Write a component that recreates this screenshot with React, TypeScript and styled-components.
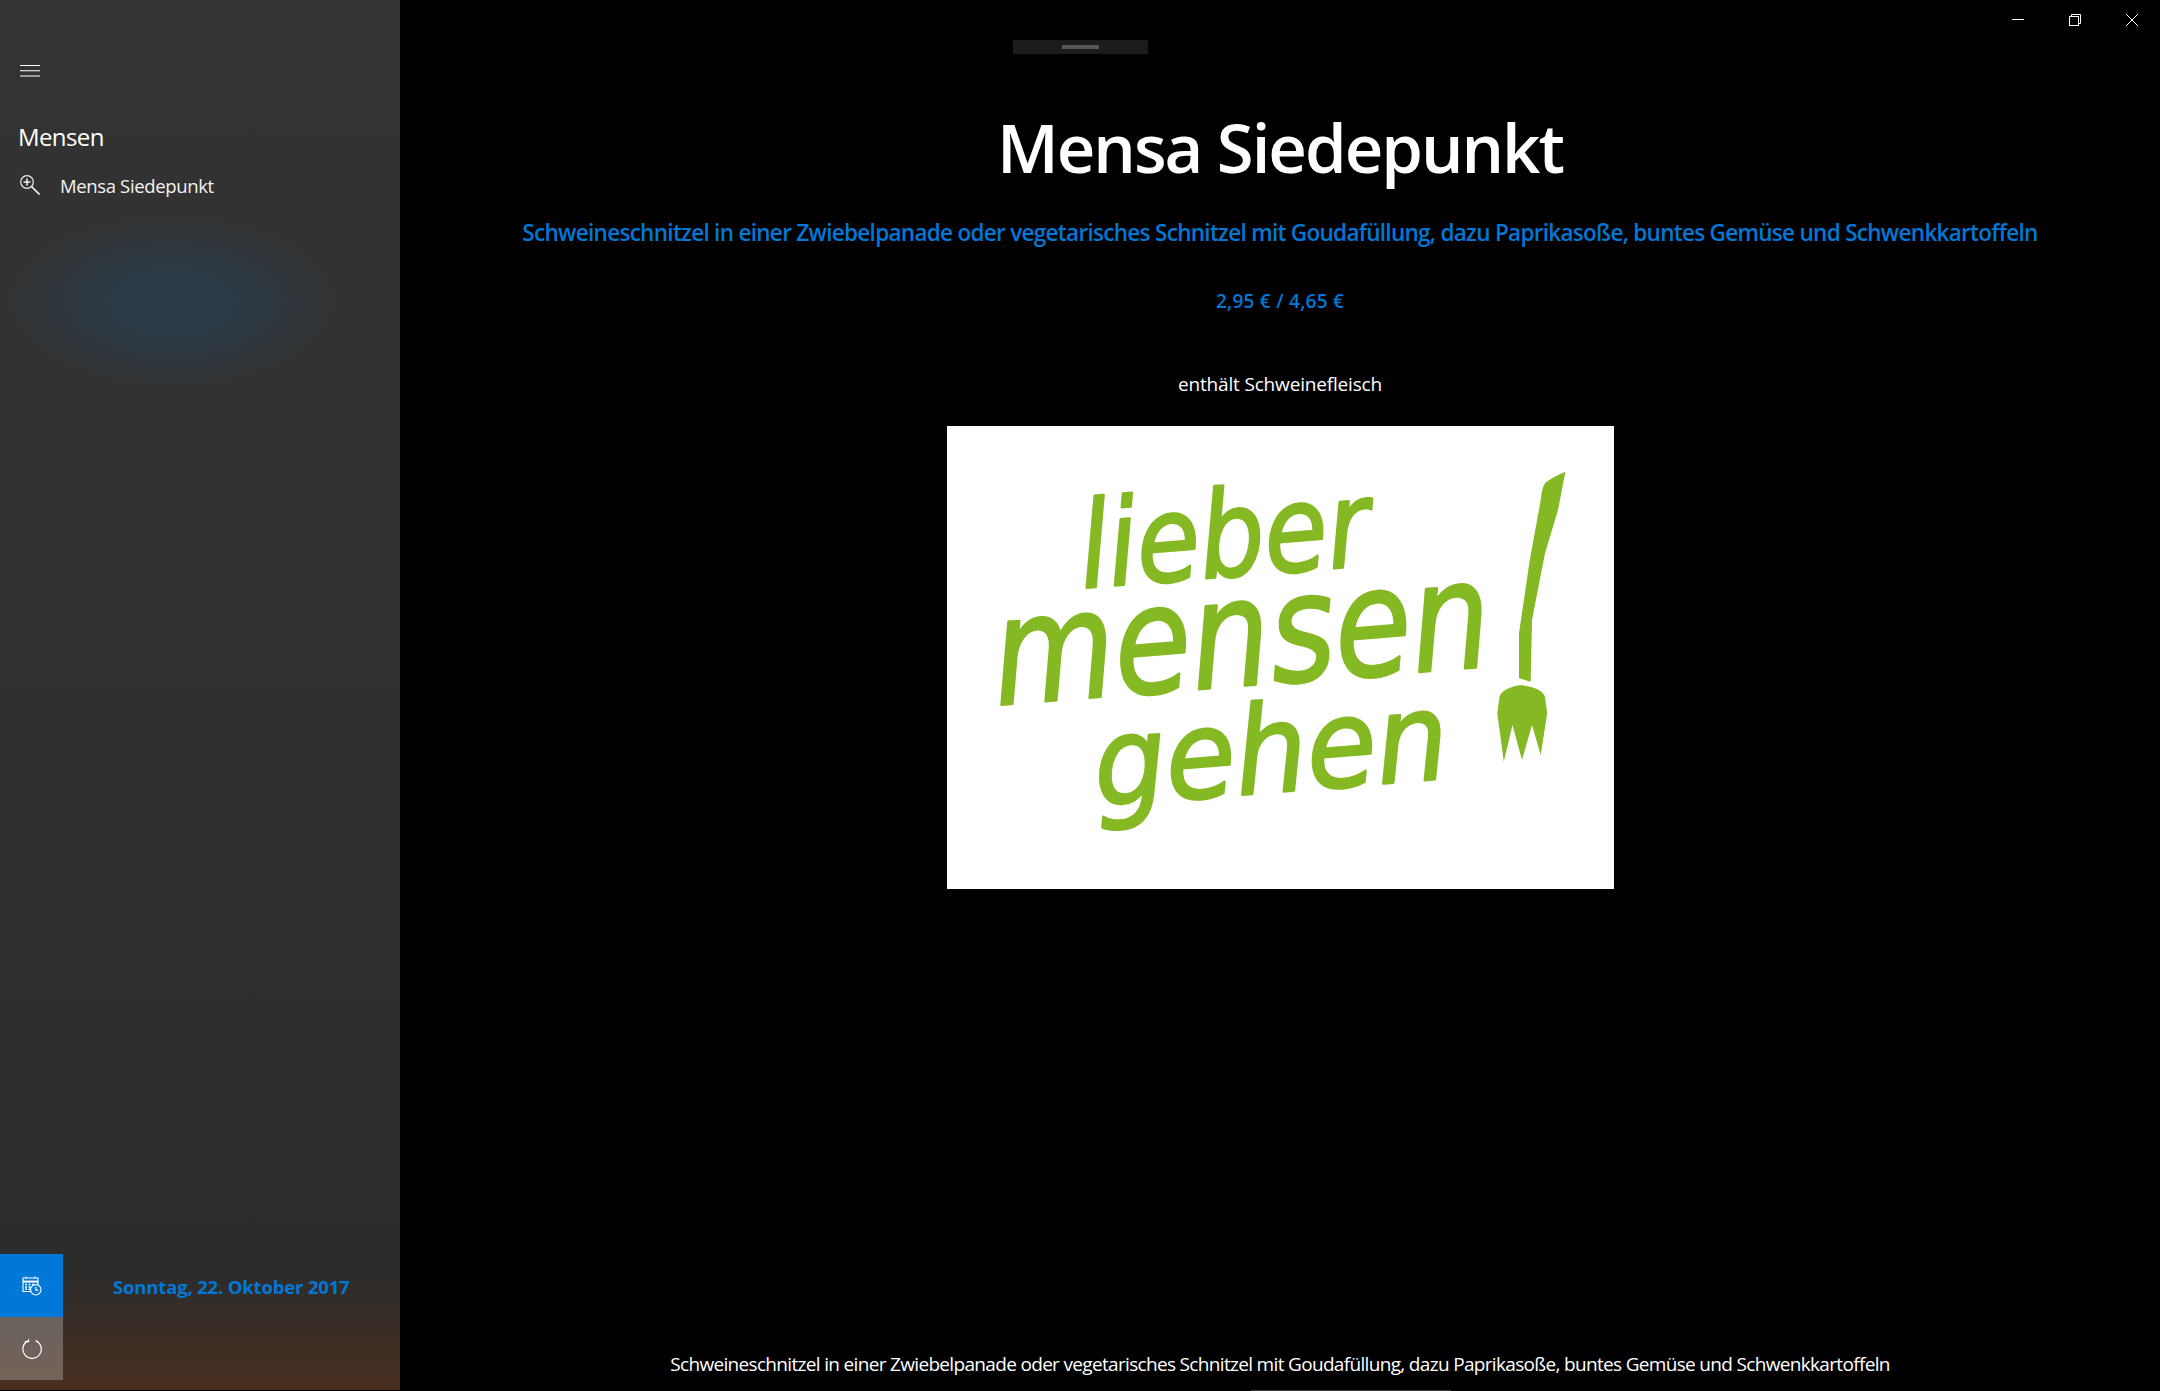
import React from 'react';
import styled, { createGlobalStyle } from 'styled-components';

const GlobalStyle = createGlobalStyle`
  html, body {
    margin: 0;
    padding: 0;
    background: #000;
    font-family: "Open Sans", "Noto Sans", "Liberation Sans", sans-serif;
    color: #fff;
  }
`;

const Page = styled.div`
  position: relative;
  display: flex;
  width: 2160px;
  height: 1391px;
  overflow: hidden;
  background: #000;
`;

const Sidebar = styled.aside`
  display: flex;
  flex-direction: column;
  width: 400px;
  height: 1390px;
  flex: none;
  background:
    radial-gradient(ellipse 170px 90px at 172px 303px, rgba(30, 75, 110, 0.34) 30%, rgba(30, 75, 110, 0) 100%),
    linear-gradient(to bottom, rgba(90, 50, 25, 0) 1270px, rgba(90, 50, 25, 0.62) 1390px),
    linear-gradient(to bottom, #333 0%, #303030 60%, #2b2b2b 100%);
`;

const MenuButton = styled.button`
  display: flex;
  align-items: center;
  width: 60px;
  height: 20px;
  margin-top: 61px;
  padding: 0 0 0 20px;
  border: 0;
  background: none;
`;

const GroupTitle = styled.h2`
  margin: 39px 0 0 18px;
  font-size: 24px;
  line-height: 34px;
  font-weight: 400;
  letter-spacing: -0.6px;
`;

const NavItem = styled.div`
  display: flex;
  align-items: center;
  height: 30px;
  margin-top: 16px;
  padding-left: 20px;
  font-size: 18.5px;
  letter-spacing: -0.36px;
  color: #f2f2f2;
`;

const NavLabel = styled.span`
  margin-left: 20px;
`;

const BottomBar = styled.div`
  display: flex;
  margin-top: auto;
  margin-bottom: 10px;
`;

const ButtonStack = styled.div`
  display: flex;
  flex-direction: column;
`;

const SquareButton = styled.div<{ $active?: boolean }>`
  display: flex;
  align-items: center;
  justify-content: center;
  width: 63px;
  height: 63px;
  background: ${(p) => (p.$active ? '#0078d7' : 'rgba(255, 255, 255, 0.25)')};
`;

const DateLabel = styled.div`
  margin: 0 0 0 50px;
  height: 63px;
  line-height: 66px;
  font-size: 18.5px;
  font-weight: 700;
  letter-spacing: -0.17px;
  color: #0078d7;
  white-space: nowrap;
`;

const Main = styled.main`
  position: relative;
  display: flex;
  flex: 1;
  flex-direction: column;
  align-items: center;
  min-width: 0;
`;

const DragHandle = styled.div`
  display: flex;
  align-items: center;
  justify-content: center;
  width: 135px;
  height: 14px;
  margin: 40px 0 0 -400px;
  background: #1c1c1c;
`;

const Grip = styled.div`
  width: 37px;
  height: 4px;
  background: #555;
`;

const Title = styled.h1`
  margin: 45px 0 0;
  font-size: 67px;
  line-height: 96px;
  font-weight: 600;
  letter-spacing: -2px;
  white-space: nowrap;
`;

const Subtitle = styled.div`
  margin-top: 22px;
  font-size: 22.5px;
  line-height: 32px;
  font-weight: 600;
  letter-spacing: -0.7px;
  color: #0078d7;
  white-space: nowrap;
`;

const Price = styled.div`
  margin-top: 36px;
  font-size: 19px;
  line-height: 32px;
  font-weight: 600;
  letter-spacing: 0.25px;
  color: #0078d7;
`;

const Note = styled.div`
  margin-top: 51px;
  font-size: 19px;
  line-height: 32px;
  letter-spacing: -0.17px;
`;

const LogoCard = styled.div`
  width: 667px;
  height: 463px;
  margin-top: 26px;
  background: #fff;
`;

const Caption = styled.div`
  margin: auto 0 11px;
  font-size: 19px;
  line-height: 32px;
  letter-spacing: -0.67px;
  white-space: nowrap;
`;

const BottomHandle = styled.div`
  position: absolute;
  left: 851px;
  bottom: 0;
  width: 200px;
  height: 1px;
  background: #3a3a3a;
`;

const WindowControls = styled.div`
  position: absolute;
  top: 0;
  right: 0;
  display: flex;
`;

const ControlButton = styled.div`
  display: flex;
  align-items: center;
  justify-content: center;
  width: 57px;
  height: 40px;
`;

const HandLettering = styled.text`
  font-family: "DejaVu Sans", sans-serif;
  font-style: italic;
  font-weight: 400;
  fill: #84b924;
  stroke: #84b924;
  stroke-width: 2.5px;
  stroke-linejoin: round;
`;

function HamburgerIcon() {
  return (
    <svg width="20" height="12" viewBox="0 0 20 12" fill="none" stroke="#fff" strokeWidth="1">
      <path d="M0 .5h20M0 5.75h20M0 11h20" />
    </svg>
  );
}

function ZoomIcon() {
  return (
    <svg width="20" height="20" viewBox="0 0 20 20" fill="none" stroke="#eee" strokeWidth="1.2">
      <circle cx="7" cy="7" r="6.3" />
      <path d="M7 3.6v6.8M3.6 7h6.8" strokeWidth="1.6" />
      <path d="M11.6 11.6L19.6 19.6" strokeWidth="1.6" />
    </svg>
  );
}

function CalendarClockIcon() {
  return (
    <svg width="20" height="20" viewBox="0 0 20 20" fill="none" stroke="#fff" strokeWidth="1.1">
      <path d="M9 15.5H1V2h15v7" />
      <path d="M1 5.6h15" strokeWidth="2" />
      <path d="M4 .5v2M13 .5v2" />
      <path d="M3 8.5h2M6.5 8.5h2M10 8.5h2M3 11h2M6.5 11h2M3 13.3h2M6.5 13.3h2" strokeWidth="1.4" />
      <circle cx="13.8" cy="13.8" r="5.2" fill="#0078d7" />
      <path d="M13.8 10.8v3.3h2.6" />
    </svg>
  );
}

function RefreshIcon() {
  return (
    <svg width="20" height="20" viewBox="0 0 20 20" fill="none" stroke="#fff" strokeWidth="1.2">
      <path d="M6 1.9A9.2 9.2 0 1 0 13.5 1.6" />
      <path d="M6.6 .3V2.6H2.8" />
    </svg>
  );
}

function MinimizeIcon() {
  return (
    <svg width="12" height="12" viewBox="0 0 12 12" stroke="#fff" strokeWidth="1">
      <path d="M0 5.5h12" />
    </svg>
  );
}

function RestoreIcon() {
  return (
    <svg width="12" height="12" viewBox="0 0 12 12" fill="none" stroke="#fff" strokeWidth="1">
      <path d="M2.5 2.5V.5h9v9h-2" />
      <rect x=".5" y="2.5" width="9" height="9" />
    </svg>
  );
}

function CloseIcon() {
  return (
    <svg width="12" height="12" viewBox="0 0 12 12" stroke="#fff" strokeWidth="1">
      <path d="M0 0l12 12M12 0L0 12" />
    </svg>
  );
}

function MensaLogo() {
  return (
    <svg width="667" height="463" viewBox="0 0 667 463">
      <HandLettering x="136" y="162" fontSize="120" textLength="290" lengthAdjust="spacingAndGlyphs" transform="rotate(-4.5 136 162)">lieber</HandLettering>
      <HandLettering x="50" y="279" fontSize="150" textLength="498" lengthAdjust="spacingAndGlyphs" transform="rotate(-4.5 50 279)">mensen</HandLettering>
      <HandLettering x="150" y="380" fontSize="122" textLength="355" lengthAdjust="spacingAndGlyphs" transform="rotate(-4.5 150 380)">gehen</HandLettering>
      <path
        fill="#84b924"
        d="M618.4 45.7C608 50 600 55 598 57.3C595 62 594.5 68 593.7 74L582.8 134L572 207.3V252.3L583.7 255.7L585 194L598 127.3L611 84Z"
      />
      <path
        fill="#84b924"
        d="M574 259C562 261 554 265 552.5 270.7L550.3 287.3L556.8 335.7L565.5 299L575 334L585 299L593.7 329L600.2 287.3L598 270.7C595 263 585 261 574 259Z"
      />
    </svg>
  );
}

export default function App() {
  return (
    <Page>
      <GlobalStyle />
      <Sidebar>
        <MenuButton aria-label="Menü">
          <HamburgerIcon />
        </MenuButton>
        <GroupTitle>Mensen</GroupTitle>
        <NavItem>
          <ZoomIcon />
          <NavLabel>Mensa Siedepunkt</NavLabel>
        </NavItem>
        <BottomBar>
          <ButtonStack>
            <SquareButton $active>
              <CalendarClockIcon />
            </SquareButton>
            <SquareButton>
              <RefreshIcon />
            </SquareButton>
          </ButtonStack>
          <DateLabel>Sonntag, 22. Oktober 2017</DateLabel>
        </BottomBar>
      </Sidebar>
      <Main>
        <DragHandle>
          <Grip />
        </DragHandle>
        <Title>Mensa Siedepunkt</Title>
        <Subtitle>
          Schweineschnitzel in einer Zwiebelpanade oder vegetarisches Schnitzel mit Goudafüllung, dazu Paprikasoße, buntes Gemüse und Schwenkkartoffeln
        </Subtitle>
        <Price>2,95 € / 4,65 €</Price>
        <Note>enthält Schweinefleisch</Note>
        <LogoCard>
          <MensaLogo />
        </LogoCard>
        <Caption>
          Schweineschnitzel in einer Zwiebelpanade oder vegetarisches Schnitzel mit Goudafüllung, dazu Paprikasoße, buntes Gemüse und Schwenkkartoffeln
        </Caption>
        <BottomHandle />
      </Main>
      <WindowControls>
        <ControlButton>
          <MinimizeIcon />
        </ControlButton>
        <ControlButton>
          <RestoreIcon />
        </ControlButton>
        <ControlButton>
          <CloseIcon />
        </ControlButton>
      </WindowControls>
    </Page>
  );
}
